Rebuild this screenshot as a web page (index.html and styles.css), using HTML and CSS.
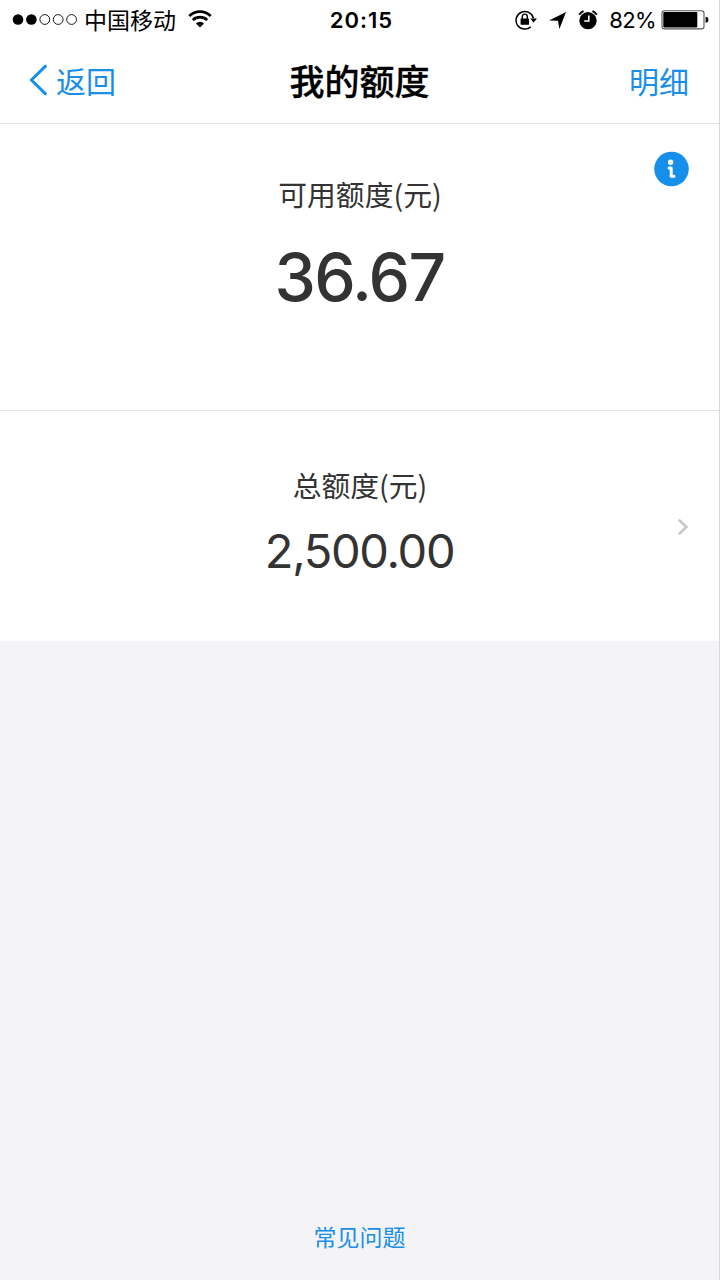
FILE: index.html
```html
<!DOCTYPE html>
<html lang="zh-CN">
<head>
    <meta charset="UTF-8">
    <meta name="viewport" content="width=device-width, initial-scale=1.0">
    <title>我的额度</title>
    <link rel="stylesheet" href="styles.css">
</head>
<body>
    <div class="page">
        <div class="status-bar">
            <div class="status-left">
                <svg class="signal" width="66" height="14" viewBox="0 0 66 14">
                    <circle cx="6" cy="6.5" r="5.3"/>
                    <circle cx="19.4" cy="6.5" r="5.3"/>
                    <g fill="none" stroke="#000" stroke-width="0.9">
                        <circle cx="32.8" cy="6.5" r="4.9"/>
                        <circle cx="46.2" cy="6.5" r="4.9"/>
                        <circle cx="59.6" cy="6.5" r="4.9"/>
                    </g>
                </svg>
                <span class="carrier">中国移动</span>
                <svg class="wifi" width="24" height="20" viewBox="0 0 24 20">
                    <g fill="none" stroke="#000" stroke-width="2.7">
                        <path d="M1.3 6 A15.2 15.2 0 0 1 22.7 6"/>
                        <path d="M4.8 10 A10.4 10.4 0 0 1 19.2 10"/>
                    </g>
                    <path d="M12 17.4 L7.9 13.4 A5.8 5.8 0 0 1 16.1 13.4 Z"/>
                </svg>
            </div>
            <div class="time">20:15</div>
            <div class="status-right">
                <svg class="lock" width="22" height="20" viewBox="0 0 22 20">
                    <path d="M15.8 16.8 A8.8 8.8 0 1 1 18.4 8.2" fill="none" stroke="#000" stroke-width="1.5"/>
                    <path d="M15.2 8.6 H22 L18.6 12.6 Z"/>
                    <rect x="5.6" y="8.4" width="8.4" height="6.4" rx="0.6"/>
                    <path d="M7.3 9 V6.6 A2.5 2.5 0 0 1 12.3 6.6 V9" fill="none" stroke="#000" stroke-width="1.4"/>
                </svg>
                <svg class="location" width="17" height="17" viewBox="0 0 17 17">
                    <path d="M17 0 L10.4 17 L9 8.8 L0 8.4 Z"/>
                </svg>
                <svg class="alarm" width="20" height="20" viewBox="0 0 20 20">
                    <circle cx="10" cy="10.6" r="8.7"/>
                    <path d="M1.2 4.6 A10 10 0 0 1 5.6 1.2 M14.4 1.2 A10 10 0 0 1 18.8 4.6" fill="none" stroke="#000" stroke-width="1.8"/>
                    <path d="M10.8 5.4 V11 H6.2" fill="none" stroke="#fff" stroke-width="1.6"/>
                </svg>
                <span class="percent">82%</span>
                <svg class="battery" width="48" height="20" viewBox="0 0 48 20">
                    <rect x="1" y="0.7" width="42" height="18.2" rx="2.5" fill="#fff" stroke="#555" stroke-width="1.1"/>
                    <rect x="2.3" y="2" width="34" height="15.6" rx="1"/>
                    <path d="M44.6 6.8 Q47.4 7 47.4 9.8 Q47.4 12.6 44.6 12.8 Z"/>
                </svg>
            </div>
        </div>

        <div class="nav">
            <a class="back">
                <svg width="20" height="32" viewBox="0 0 20 32">
                    <path d="M17.3 1.4 L2.4 16 L17.3 30.6" fill="none" stroke="#1a8fe9" stroke-width="3"/>
                </svg>
                <span>返回</span>
            </a>
            <h1 class="title">我的额度</h1>
            <a class="detail">明细</a>
        </div>

        <div class="available">
            <div class="label">可用额度(元)</div>
            <div class="amount">36.67</div>
            <svg class="info" width="36" height="36" viewBox="0 0 36 36">
                <circle cx="17.5" cy="18" r="17.3" fill="#168fec"/>
                <circle cx="16.6" cy="11.2" r="2.7" fill="#fff"/>
                <path d="M15 17 H17.2 V25.2 H20" fill="none" stroke="#fff" stroke-width="3" stroke-linejoin="round" stroke-linecap="round"/>
            </svg>
        </div>

        <div class="total">
            <div class="label">总额度(元)</div>
            <div class="amount">2,500.00</div>
            <svg class="arrow" width="12" height="18" viewBox="0 0 12 18">
                <path d="M1.8 1.8 L9.4 9 L1.8 16.2" fill="none" stroke="#c8c8cb" stroke-width="2.6"/>
            </svg>
        </div>

        <div class="footer">
            <a class="faq">常见问题</a>
        </div>
    </div>
</body>
</html>
```
FILE: styles.css
```css
* {
    box-sizing: border-box;
}

body {
    margin: 0;
    font-family: Inter, "Noto Sans CJK SC", sans-serif;
    background-color: #f4f4f7;
    color: #333;
}

.page {
    display: flex;
    flex-direction: column;
    height: 1280px;
    border-right: 1px solid #d9d9dc;
}

.status-bar {
    display: grid;
    grid-template-columns: 1fr auto 1fr;
    align-items: center;
    height: 40px;
    padding: 0 10px 0 12px;
    background-color: #fff;
    color: #000;
    font-size: 23px;
    line-height: 40px;
}

.status-left,
.status-right {
    display: flex;
    align-items: center;
}

.status-right {
    justify-content: flex-end;
}

.carrier {
    margin: 0 12px 0 6px;
    font-family: "Noto Sans CJK SC", sans-serif;
    line-height: 38px;
    padding-bottom: 2px;
}

.time {
    padding-left: 2px;
    font-size: 22px;
    font-weight: 600;
    letter-spacing: 1px;
}

.location {
    margin-left: 12px;
}

.alarm {
    margin-left: 12px;
}

.percent {
    margin: 0 5px 0 11px;
    font-size: 22px;
    letter-spacing: -0.6px;
}

.nav {
    display: grid;
    grid-template-columns: 1fr auto 1fr;
    align-items: center;
    height: 84px;
    padding: 0 30px 3px 29px;
    background-color: #fff;
    border-bottom: 1px solid #e4e4e6;
    font-family: "Noto Sans CJK SC", sans-serif;
    font-size: 30px;
    line-height: 80px;
}

.back,
.detail,
.faq {
    color: #1a8fe9;
}

.back {
    display: flex;
    align-items: center;
    gap: 7px;
}

.title {
    margin: 0;
    padding-left: 1px;
    font-size: 35px;
    font-weight: 500;
    color: #000;
    -webkit-text-stroke: 0.3px #000;
}

.detail {
    text-align: right;
}

.available,
.total {
    position: relative;
    background-color: #fff;
    text-align: center;
}

.available {
    height: 287px;
    padding-top: 50px;
    border-bottom: 1px solid #e4e4e6;
}

.total {
    height: 230px;
    padding-top: 54px;
}

.label {
    padding-left: 1px;
    font-family: "Noto Sans CJK SC", sans-serif;
    font-size: 28.8px;
    line-height: 40px;
}

.available .amount {
    margin-top: 23px;
    font-size: 66px;
    font-weight: 500;
    line-height: 80px;
    letter-spacing: -1.7px;
}

.total .amount {
    margin-top: 16px;
    font-size: 47px;
    line-height: 60px;
    letter-spacing: -1.3px;
}

.info {
    position: absolute;
    top: 27px;
    right: 29px;
}

.arrow {
    position: absolute;
    top: 107px;
    right: 30px;
}

.footer {
    display: flex;
    justify-content: center;
    margin-top: auto;
    padding-bottom: 28px;
}

.faq {
    font-family: "Noto Sans CJK SC", sans-serif;
    font-size: 23px;
    line-height: 32px;
}
```
